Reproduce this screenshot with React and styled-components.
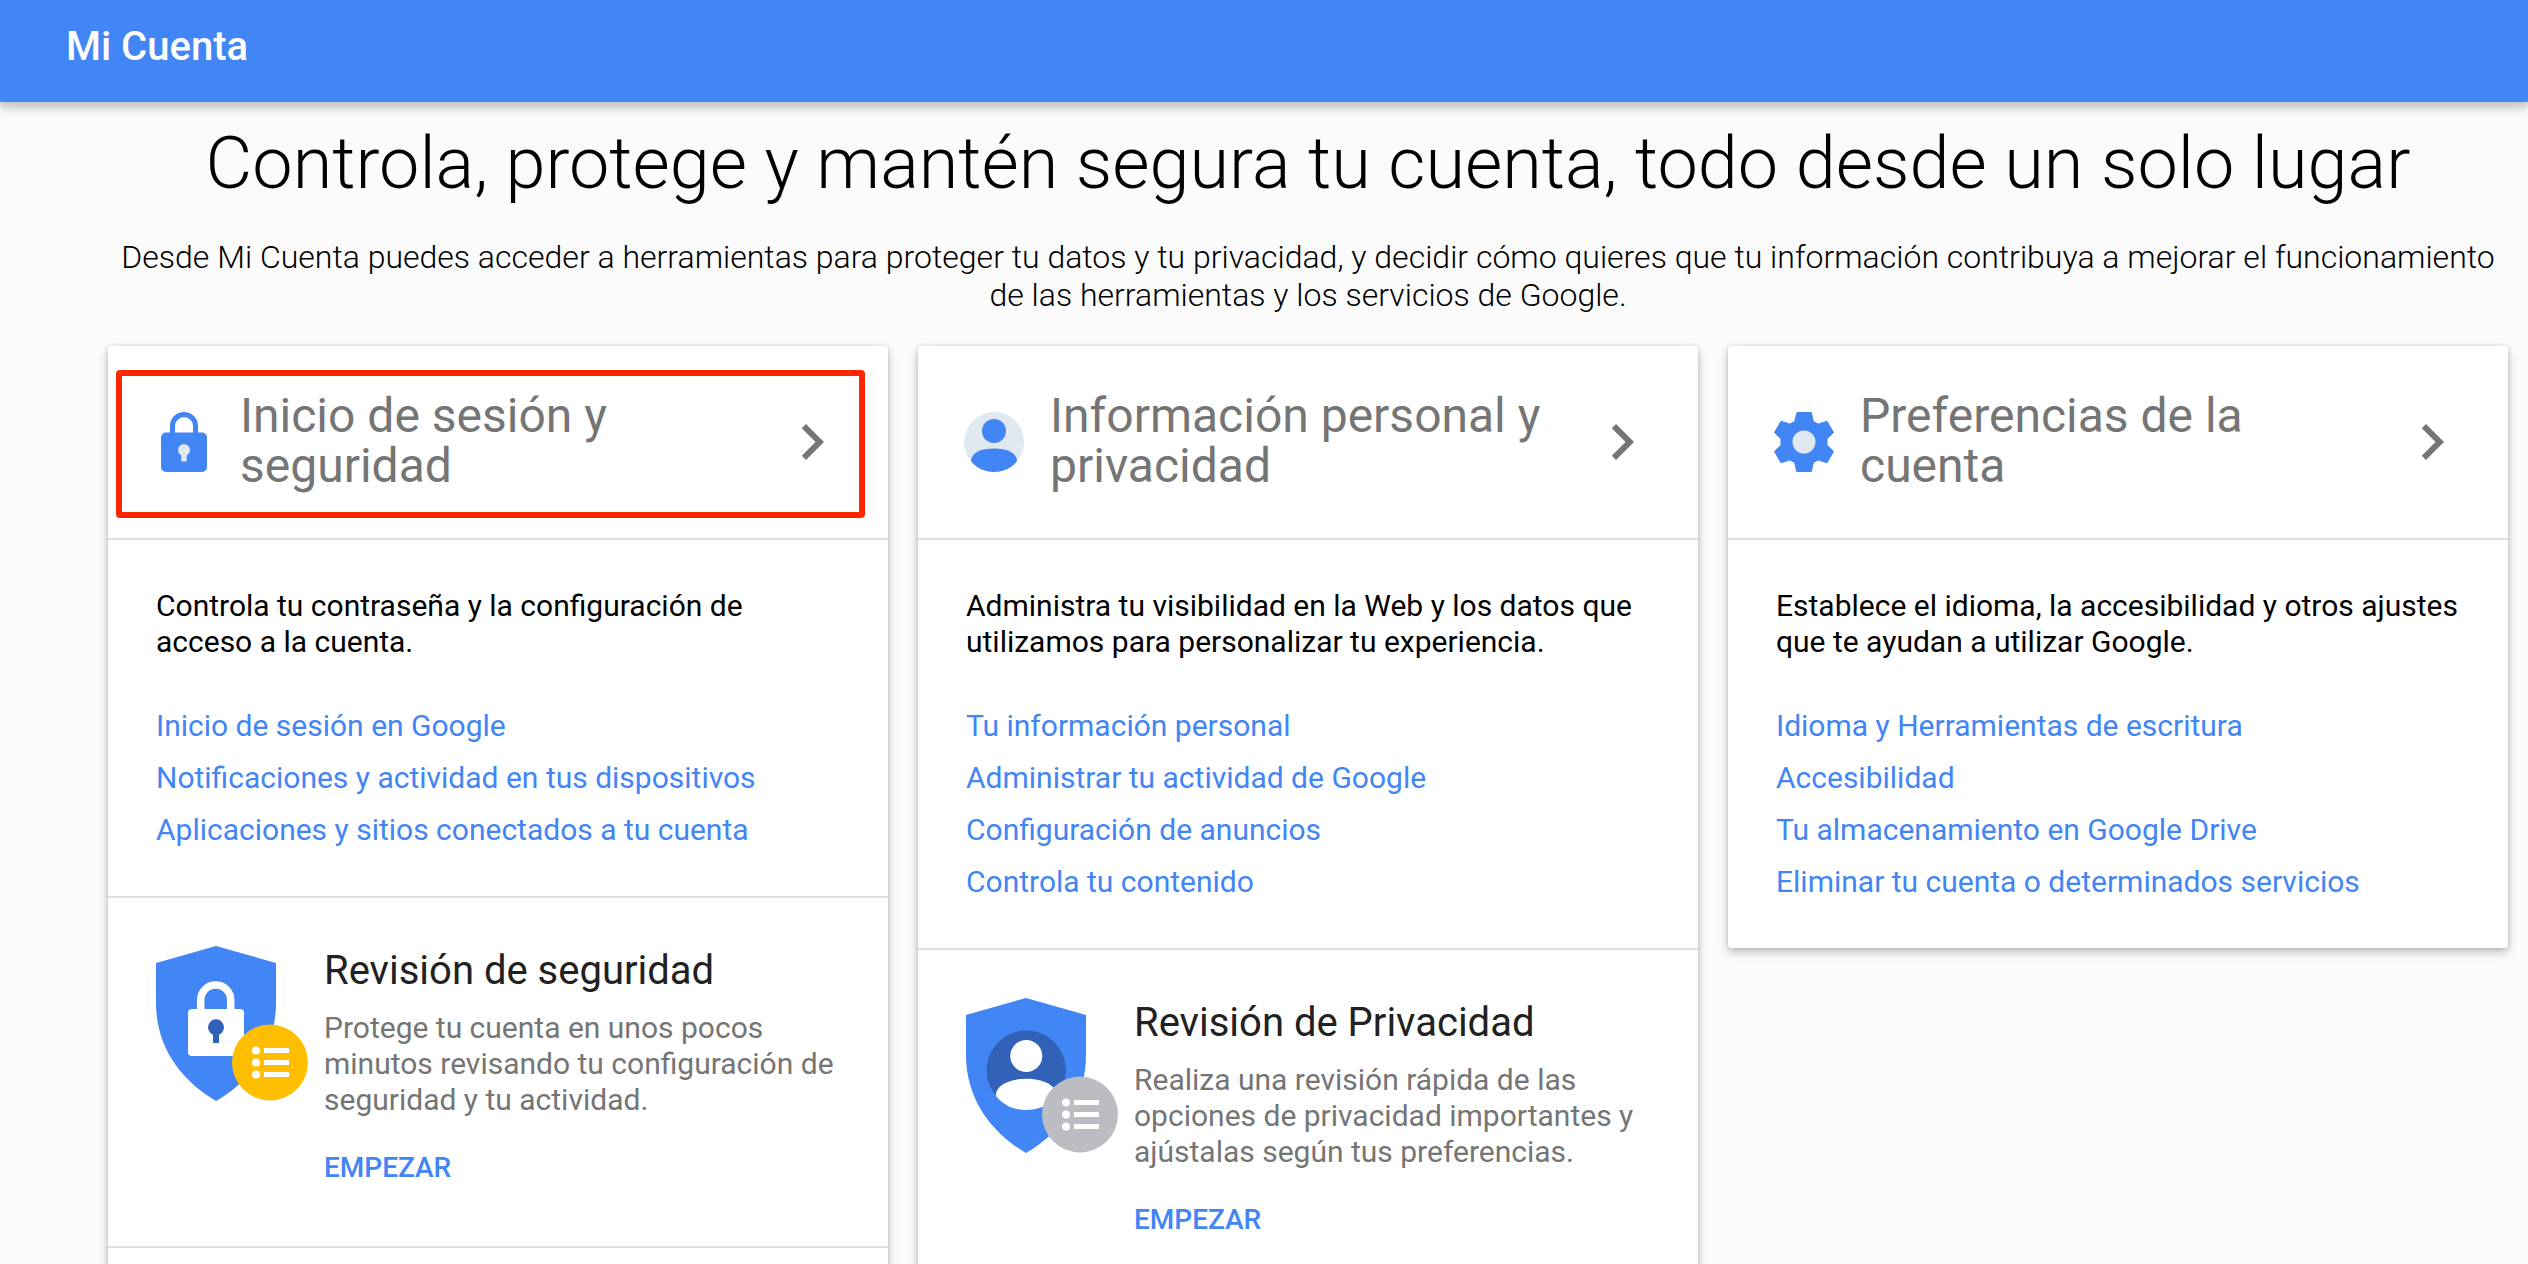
import React from "react";
import styled, { createGlobalStyle } from "styled-components";

const GlobalStyle = createGlobalStyle`
  *, *::before, *::after { box-sizing: border-box; }
  html { scrollbar-width: none; }
  body {
    margin: 0;
    background: #fbfbfb;
    color: #000;
    font-family: Roboto, "Noto Sans", sans-serif;
  }
  h1, h2, h3, p, ul { margin: 0; padding: 0; }
  ul { list-style: none; }
`;

const TopBar = styled.header`
  height: 102px;
  padding: 22px 66px;
  background: #4285f4;
  color: #fff;
  font-size: 40px;
  line-height: 50px;
  font-weight: 500;
  box-shadow: 0 2px 12px 2px rgba(0, 0, 0, 0.3);
`;

const Main = styled.main`
  padding: 20px 20px 0 108px;
`;

const Intro = styled.section`
  text-align: center;
  font-weight: 300;
`;

const PageTitle = styled.h1`
  font-size: 72px;
  line-height: 84px;
  font-weight: 300;
`;

const Lead = styled.p`
  margin: 32px 0;
  font-size: 32px;
  line-height: 38px;
`;

const Cards = styled.div`
  display: grid;
  grid-template-columns: repeat(3, minmax(0, 1fr));
  gap: 30px;
  align-items: start;
`;

const Card = styled.article`
  background: #fff;
  border-radius: 4px;
  box-shadow: 0 4px 10px rgba(0, 0, 0, 0.26), 0 0 4px rgba(0, 0, 0, 0.1);
`;

const CardHead = styled.a`
  position: relative;
  display: flex;
  align-items: center;
  height: 194px;
  padding: 0 40px 0 46px;
  border-bottom: 2px solid #e0e0e0;
  color: #757575;
  text-decoration: none;
`;

const CardTitle = styled.h2`
  flex: 1;
  margin: 0 26px;
  padding-bottom: 2px;
  font-size: 48px;
  line-height: 50px;
  font-weight: 400;
`;

const Highlight = styled.span`
  position: absolute;
  inset: 24px 23px 20px 8px;
  border: 6px solid #ff2600;
  border-radius: 4px;
`;

const CardBody = styled.div`
  padding: 48px 48px 40px;
  font-size: 30px;
  line-height: 36px;
`;

const Links = styled.ul`
  margin-top: 40px;

  a {
    display: block;
    padding: 8px 0;
    color: #4285f4;
    text-decoration: none;
  }
`;

const Review = styled.section`
  display: flex;
  gap: 16px;
  padding: 48px;
  border-top: 2px solid #e0e0e0;

  svg { flex: none; }
`;

const ReviewText = styled.div`
  flex: 1;
  color: #757575;
  font-size: 30px;
  line-height: 36px;
`;

const ReviewTitle = styled.h3`
  margin-bottom: 14px;
  color: #212121;
  font-size: 40px;
  line-height: 50px;
  font-weight: 400;
`;

const Start = styled.a`
  display: block;
  width: fit-content;
  margin: 32px 0 12px;
  color: #4285f4;
  font-size: 28px;
  font-weight: 500;
  text-decoration: none;
`;

const NextSection = styled.div`
  height: 200px;
  border-top: 2px solid #e0e0e0;
`;

const LockIcon = () => (
  <svg width="60" height="60" viewBox="0 0 60 60" aria-hidden="true">
    <path d="M18.5 23V14a11.500 11.500 0 0 1 23 0v9" fill="none" stroke="#4285f4" strokeWidth="5" />
    <rect x="7" y="20.5" width="46" height="39.5" rx="5" fill="#4285f4" />
    <circle cx="30" cy="38" r="6" fill="#dfe9ef" />
    <path d="M27.300 40h5.400v9.500h-5.400z" fill="#dfe9ef" />
  </svg>
);

const PersonIcon = () => (
  <svg width="60" height="60" viewBox="0 0 60 60" aria-hidden="true">
    <circle cx="30" cy="30" r="30" fill="#dfe9ef" />
    <circle cx="30" cy="19" r="12" fill="#4285f4" />
    <path d="M7 49C7 41 17 36.500 30 36.500S53 41 53 49C48 56 39 60 30 60S12 56 7 49z" fill="#4285f4" />
  </svg>
);

const GearIcon = () => (
  <svg width="60" height="60" viewBox="0 0 60 60" aria-hidden="true">
    <path
      fill="#4285f4"
      stroke="#4285f4"
      strokeLinejoin="round"
      d="M23 .5h14.300L39.300 9.500l5 2.500L53 9.200l6.500 11.300L53 26.800v6.400l6.500 6.300L53 50.800 44.300 48l-5 2.500-2 9H22.700l-2-9-5-2.500L7 50.800.5 39.500 7 33.200v-6.400L.5 20.500 7 9.200 15.700 12l5-2.500z"
    />
    <circle cx="30" cy="30" r="11.5" fill="#dfe9ef" />
  </svg>
);

const Chevron = () => (
  <svg width="72" height="72" viewBox="0 0 24 24" aria-hidden="true">
    <path d="M10 6L8.590 7.410 13.170 12l-4.580 4.590L10 18l6-6z" fill="#757575" />
  </svg>
);

const Shield = ({ badge, children }) => (
  <svg width="152" height="155" viewBox="0 0 152 155" aria-hidden="true">
    <path d="M60 0l60 17v40c0 43-24 77-60 98C24 134 0 100 0 57V17z" fill="#4285f4" />
    {children}
    <circle cx="114" cy="116.5" r="38" fill={badge} />
    {[104.5, 116.5, 128.5].map((y) => (
      <g key={y} fill="#fff">
        <circle cx="100" cy={y} r="4" />
        <rect x="108" y={y - 2.5} width="25" height="5" />
      </g>
    ))}
  </svg>
);

const SecurityShield = () => (
  <Shield badge="#ffbf00">
    <path d="M44.700 66V54a15 15 0 0 1 30 0v12" fill="none" stroke="#fff" strokeWidth="7.5" />
    <rect x="32" y="63" width="56" height="47" rx="4" fill="#fff" />
    <circle cx="60" cy="81.3" r="8" fill="#3261b8" />
    <path d="M57 84h6v13h-6z" fill="#3261b8" />
  </Shield>
);

const PrivacyShield = () => (
  <Shield badge="#bbbdc2">
    <circle cx="60.3" cy="72.3" r="39.7" fill="#3261b8" />
    <circle cx="60.3" cy="58" r="16" fill="#fff" />
    <path d="M30 98C29 88 43 80.700 60.300 80.700S91.500 88 90.500 98C83 107 73 112 60.300 112S37 107 30 98z" fill="#fff" />
  </Shield>
);

const sections = [
  {
    title: "Inicio de sesión y seguridad",
    Icon: LockIcon,
    highlighted: true,
    text: "Controla tu contraseña y la configuración de acceso a la cuenta.",
    links: [
      "Inicio de sesión en Google",
      "Notificaciones y actividad en tus dispositivos",
      "Aplicaciones y sitios conectados a tu cuenta",
    ],
    review: {
      title: "Revisión de seguridad",
      Art: SecurityShield,
      text: "Protege tu cuenta en unos pocos minutos revisando tu configuración de seguridad y tu actividad.",
    },
  },
  {
    title: "Información personal y privacidad",
    Icon: PersonIcon,
    text: "Administra tu visibilidad en la Web y los datos que utilizamos para personalizar tu experiencia.",
    links: [
      "Tu información personal",
      "Administrar tu actividad de Google",
      "Configuración de anuncios",
      "Controla tu contenido",
    ],
    review: {
      title: "Revisión de Privacidad",
      Art: PrivacyShield,
      text: "Realiza una revisión rápida de las opciones de privacidad importantes y ajústalas según tus preferencias.",
    },
  },
  {
    title: "Preferencias de la cuenta",
    Icon: GearIcon,
    text: "Establece el idioma, la accesibilidad y otros ajustes que te ayudan a utilizar Google.",
    links: [
      "Idioma y Herramientas de escritura",
      "Accesibilidad",
      "Tu almacenamiento en Google Drive",
      "Eliminar tu cuenta o determinados servicios",
    ],
  },
];

const Section = ({ title, Icon, highlighted, text, links, review }) => (
  <Card>
    <CardHead href="#">
      <Icon />
      <CardTitle>{title}</CardTitle>
      <Chevron />
      {highlighted && <Highlight />}
    </CardHead>
    <CardBody>
      <p>{text}</p>
      <Links>
        {links.map((label) => (
          <li key={label}>
            <a href="#">{label}</a>
          </li>
        ))}
      </Links>
    </CardBody>
    {review && (
      <>
        <Review>
          <review.Art />
          <ReviewText>
            <ReviewTitle>{review.title}</ReviewTitle>
            <p>{review.text}</p>
            <Start href="#">EMPEZAR</Start>
          </ReviewText>
        </Review>
        <NextSection />
      </>
    )}
  </Card>
);

export default function App() {
  return (
    <>
      <GlobalStyle />
      <TopBar>Mi Cuenta</TopBar>
      <Main>
        <Intro>
          <PageTitle>Controla, protege y mantén segura tu cuenta, todo desde un solo lugar</PageTitle>
          <Lead>
            Desde Mi Cuenta puedes acceder a herramientas para proteger tu datos y tu privacidad, y
            decidir cómo quieres que tu información contribuya a mejorar el funcionamiento de las
            herramientas y los servicios de Google.
          </Lead>
        </Intro>
        <Cards>
          {sections.map((section) => (
            <Section key={section.title} {...section} />
          ))}
        </Cards>
      </Main>
    </>
  );
}
